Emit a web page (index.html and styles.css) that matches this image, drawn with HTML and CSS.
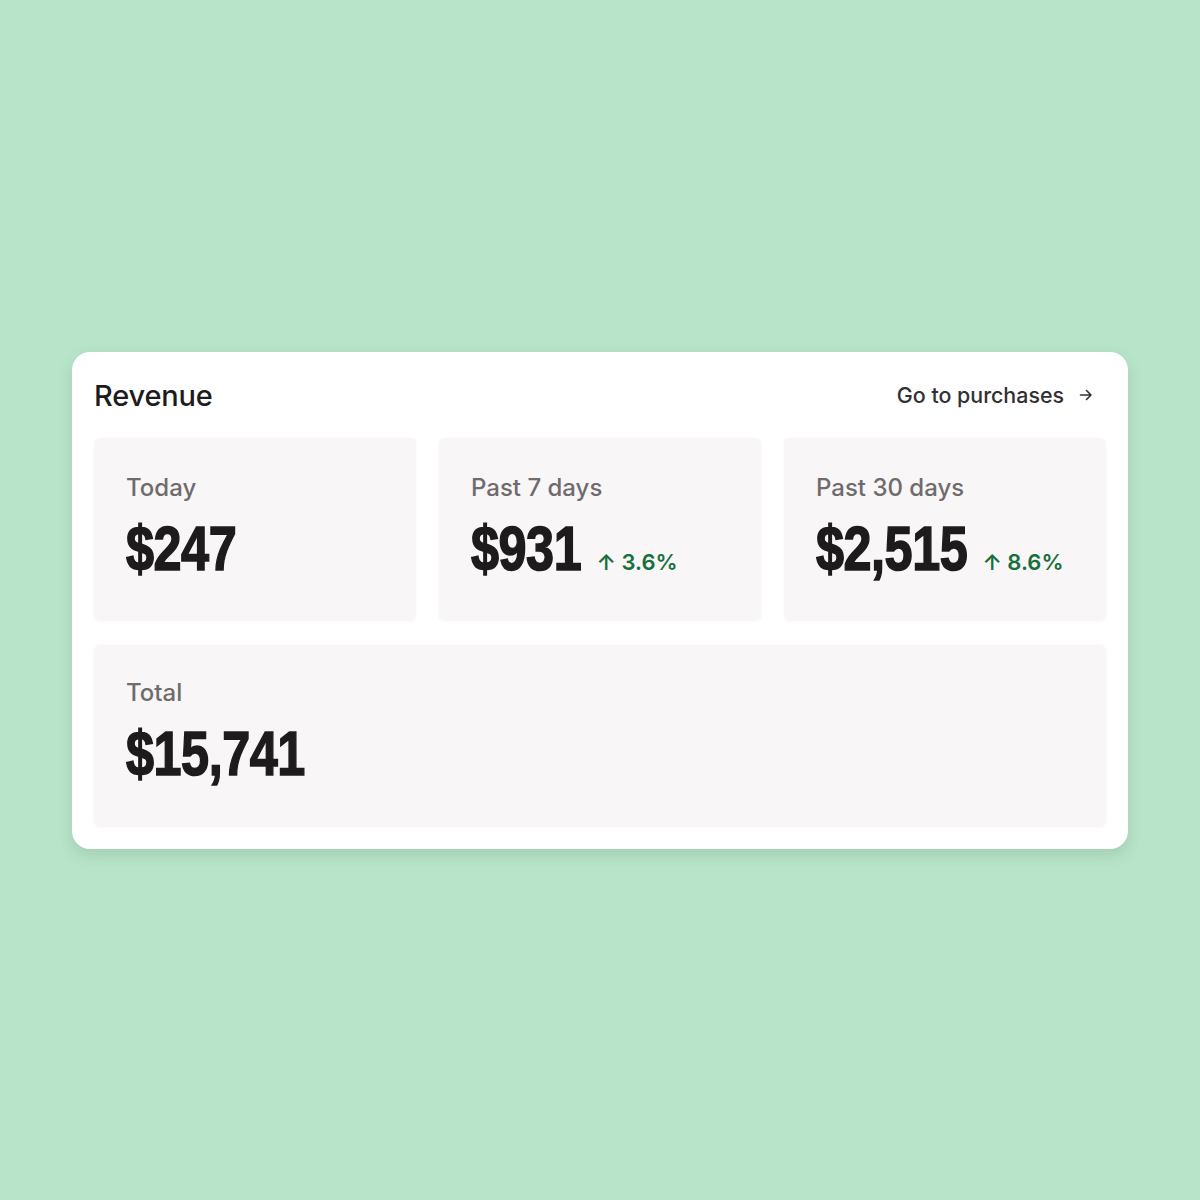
FILE: index.html
```html
<!DOCTYPE html>
<html lang="en">
<head>
<meta charset="utf-8">
<title>Revenue</title>
<link rel="stylesheet" href="styles.css">
</head>
<body>
  <main class="stage">
    <section class="card">
      <header class="card-head">
        <h2 class="card-title">Revenue</h2>
        <a class="head-link" href="#">Go to purchases
          <svg class="arrow" viewBox="0 0 16 16" width="16" height="16" aria-hidden="true">
            <path d="M2.5 8h10.5M8.5 3.5 13 8l-4.5 4.5" fill="none" stroke="currentColor" stroke-width="1.6" stroke-linecap="round" stroke-linejoin="round"/>
          </svg>
        </a>
      </header>
      <div class="stats">
        <div class="stat">
          <div class="stat-label">Today</div>
          <div class="stat-row"><span class="stat-value">$247</span></div>
        </div>
        <div class="stat">
          <div class="stat-label">Past 7 days</div>
          <div class="stat-row"><span class="stat-value">$931</span><span class="delta">↑ 3.6%</span></div>
        </div>
        <div class="stat">
          <div class="stat-label">Past 30 days</div>
          <div class="stat-row"><span class="stat-value">$2,515</span><span class="delta">↑ 8.6%</span></div>
        </div>
        <div class="stat stat-wide">
          <div class="stat-label">Total</div>
          <div class="stat-row"><span class="stat-value">$15,741</span></div>
        </div>
      </div>
    </section>
  </main>
</body>
</html>
```

FILE: styles.css
```css
* { box-sizing: border-box; }

html, body {
  margin: 0;
  height: 100%;
}

body {
  background: #b8e4c9;
  font-family: Inter, "Noto Sans", sans-serif;
  color: #1e1b1c;
}

.stage {
  padding: 352px 72px 0;
}

.card {
  background: #ffffff;
  border-radius: 18px;
  padding: 22px;
  box-shadow: 0 6px 14px rgba(60, 110, 80, 0.18);
}

.card-head {
  height: 42px;
  display: flex;
  align-items: center;
  justify-content: space-between;
  margin-bottom: 22px;
}

.card-title {
  margin: 0;
  font-size: 29px;
  font-weight: 500;
  letter-spacing: -0.2px;
  color: #1e1b1c;
}

.head-link {
  display: flex;
  align-items: center;
  gap: 14px;
  margin-right: 12px;
  font-size: 21.4px;
  font-weight: 500;
  color: #333031;
  text-decoration: none;
}

.arrow { display: block; }

.stats {
  display: grid;
  grid-template-columns: repeat(3, minmax(0, 1fr));
  column-gap: 23px;
  row-gap: 24px;
}

.stat {
  background: #f9f6f7;
  border-radius: 6px;
  height: 183px;
  padding: 35px 32px 0;
  box-shadow: 0 0 3px rgba(120, 100, 110, 0.05);
}

.stat-wide {
  grid-column: 1 / -1;
  height: 182px;
  padding-top: 33px;
}

.stat-label {
  font-size: 24px;
  font-weight: 500;
  line-height: 30px;
  color: #6f6b6c;
}

/* The figures use a condensed look: the row is squeezed horizontally
   and the delta badge is stretched back to its natural width. */
.stat-row {
  display: flex;
  align-items: baseline;
  gap: 19px;
  margin-top: 12px;
  white-space: nowrap;
  transform: scaleX(0.8);
  transform-origin: 0 0;
}

.stat-value {
  font-family: "Liberation Sans", Arimo, sans-serif;
  font-weight: 700;
  font-size: 63px;
  line-height: 66px;
  letter-spacing: -0.6px;
  color: #1e1b1c;
  -webkit-text-stroke: 1.6px #1e1b1c;
}

.delta {
  display: inline-block;
  font-size: 22px;
  font-weight: 600;
  color: #17703b;
  transform: scaleX(1.25);
  transform-origin: 0 0;
}
```
